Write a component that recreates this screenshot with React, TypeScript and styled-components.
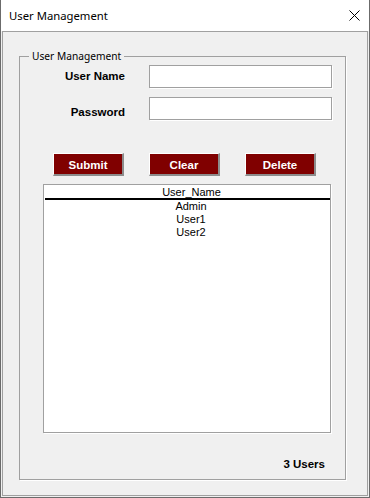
import React from "react";
import styled, { createGlobalStyle } from "styled-components";

const GlobalStyle = createGlobalStyle`
  html, body { margin: 0; padding: 0; background: #f0f0f0; }
  * { box-sizing: border-box; }
`;

const Window = styled.div`
  width: 370px;
  height: 498px;
  display: flex;
  flex-direction: column;
  background: #f0f0f0;
  border-left: 1px solid #6b6b6b;
  border-right: 1px solid #6b6b6b;
  border-bottom: 1px solid #6b6b6b;
`;

const TitleBar = styled.div`
  height: 31px;
  flex: none;
  background: #ffffff;
  display: flex;
  align-items: center;
  justify-content: space-between;
  padding: 0 9px 0 8px;
`;

const Title = styled.span`
  font-family: "Noto Sans", "Open Sans", sans-serif;
  font-size: 11.3px;
  color: #000;
`;

const CloseIcon = styled.svg`
  display: block;
  width: 11px;
  height: 11px;
`;

const Client = styled.div`
  flex: 1;
  margin: 0 1px 1px 1px;
  border: 1px solid #a0a0a0;
  background: #f0f0f0;
  padding: 17px 0 0 16px;
`;

const Group = styled.fieldset`
  width: 327px;
  margin: 0;
  padding: 0;
  min-width: 0;
  border: 1px solid #a0a0a0;
  box-shadow: 1px 1px 0 #ffffff;
`;

const Legend = styled.legend`
  margin-left: 9px;
  padding: 0 3px;
  font-family: "Noto Sans", "Open Sans", sans-serif;
  font-size: 10.2px;
  line-height: 14px;
  color: #000;
`;

const Content = styled.div`
  display: flex;
  flex-direction: column;
  padding: 2px 0 8px 0;
`;

const FormGrid = styled.div`
  display: grid;
  grid-template-columns: 105px 183px;
  grid-auto-rows: 23px;
  column-gap: 24px;
  row-gap: 9px;
`;

const Label = styled.label<{ $nudge?: number }>`
  font-family: "Liberation Sans", Arial, sans-serif;
  font-weight: bold;
  font-size: 11.5px;
  line-height: 23px;
  text-align: right;
  color: #000;
  padding-top: ${(p) => p.$nudge ?? 0}px;
`;

const TextInput = styled.input`
  width: 183px;
  height: 23px;
  margin: 0;
  border: 1px solid #a0a0a0;
  background: #ffffff;
  box-shadow: 1px 1px 0 #ffffff;
  outline: none;
  font-family: "Liberation Sans", Arial, sans-serif;
  font-size: 11px;
  padding: 0 3px;
`;

const ButtonRow = styled.div`
  display: flex;
  gap: 25px;
  margin-top: 33px;
  padding-left: 33px;
`;

const Button = styled.button`
  width: 71px;
  height: 23px;
  margin: 0;
  padding: 2px 0 0 0;
  background: #800000;
  color: #ffffff;
  border-style: solid;
  border-width: 1px 2px 2px 1px;
  border-color: #ffffff #8c8c8c #8c8c8c #ffffff;
  font-family: "Liberation Sans", Arial, sans-serif;
  font-weight: bold;
  font-size: 11.5px;
  line-height: 18px;
  text-align: center;
  cursor: pointer;
`;

const ListBox = styled.div`
  width: 288px;
  height: 249px;
  margin: 8px 0 0 23px;
  background: #ffffff;
  border: 1px solid #a0a0a0;
  box-shadow: 1px 1px 0 #ffffff;
  font-family: "Liberation Sans", Arial, sans-serif;
  font-size: 11px;
  color: #000;
`;

const ListHeader = styled.div`
  margin-left: 1px;
  padding: 2px 0 0 8px;
  line-height: 11px;
  text-align: center;
  border-bottom: 2px solid #000;
`;

const ListRow = styled.div`
  padding-left: 8px;
  line-height: 13px;
  text-align: center;
`;

const Footer = styled.div`
  margin-top: 24px;
  padding-right: 20px;
  text-align: right;
  font-family: "Liberation Sans", Arial, sans-serif;
  font-weight: bold;
  font-size: 11.5px;
  line-height: 14px;
  color: #000;
`;

const users = ["Admin", "User1", "User2"];

export default function App() {
  return (
    <>
      <GlobalStyle />
      <Window>
        <TitleBar>
          <Title>User Management</Title>
          <CloseIcon viewBox="0 0 11 11">
            <path d="M0.5 0.5 L10.5 10.5 M10.5 0.5 L0.5 10.5" stroke="#000" strokeWidth="1" fill="none" />
          </CloseIcon>
        </TitleBar>
        <Client>
          <Group>
            <Legend>User Management</Legend>
            <Content>
              <FormGrid>
                <Label>User Name</Label>
                <TextInput type="text" />
                <Label $nudge={4}>Password</Label>
                <TextInput type="password" />
              </FormGrid>
              <ButtonRow>
                <Button>Submit</Button>
                <Button>Clear</Button>
                <Button>Delete</Button>
              </ButtonRow>
              <ListBox>
                <ListHeader>User_Name</ListHeader>
                {users.map((u) => (
                  <ListRow key={u}>{u}</ListRow>
                ))}
              </ListBox>
              <Footer>{users.length} Users</Footer>
            </Content>
          </Group>
        </Client>
      </Window>
    </>
  );
}
